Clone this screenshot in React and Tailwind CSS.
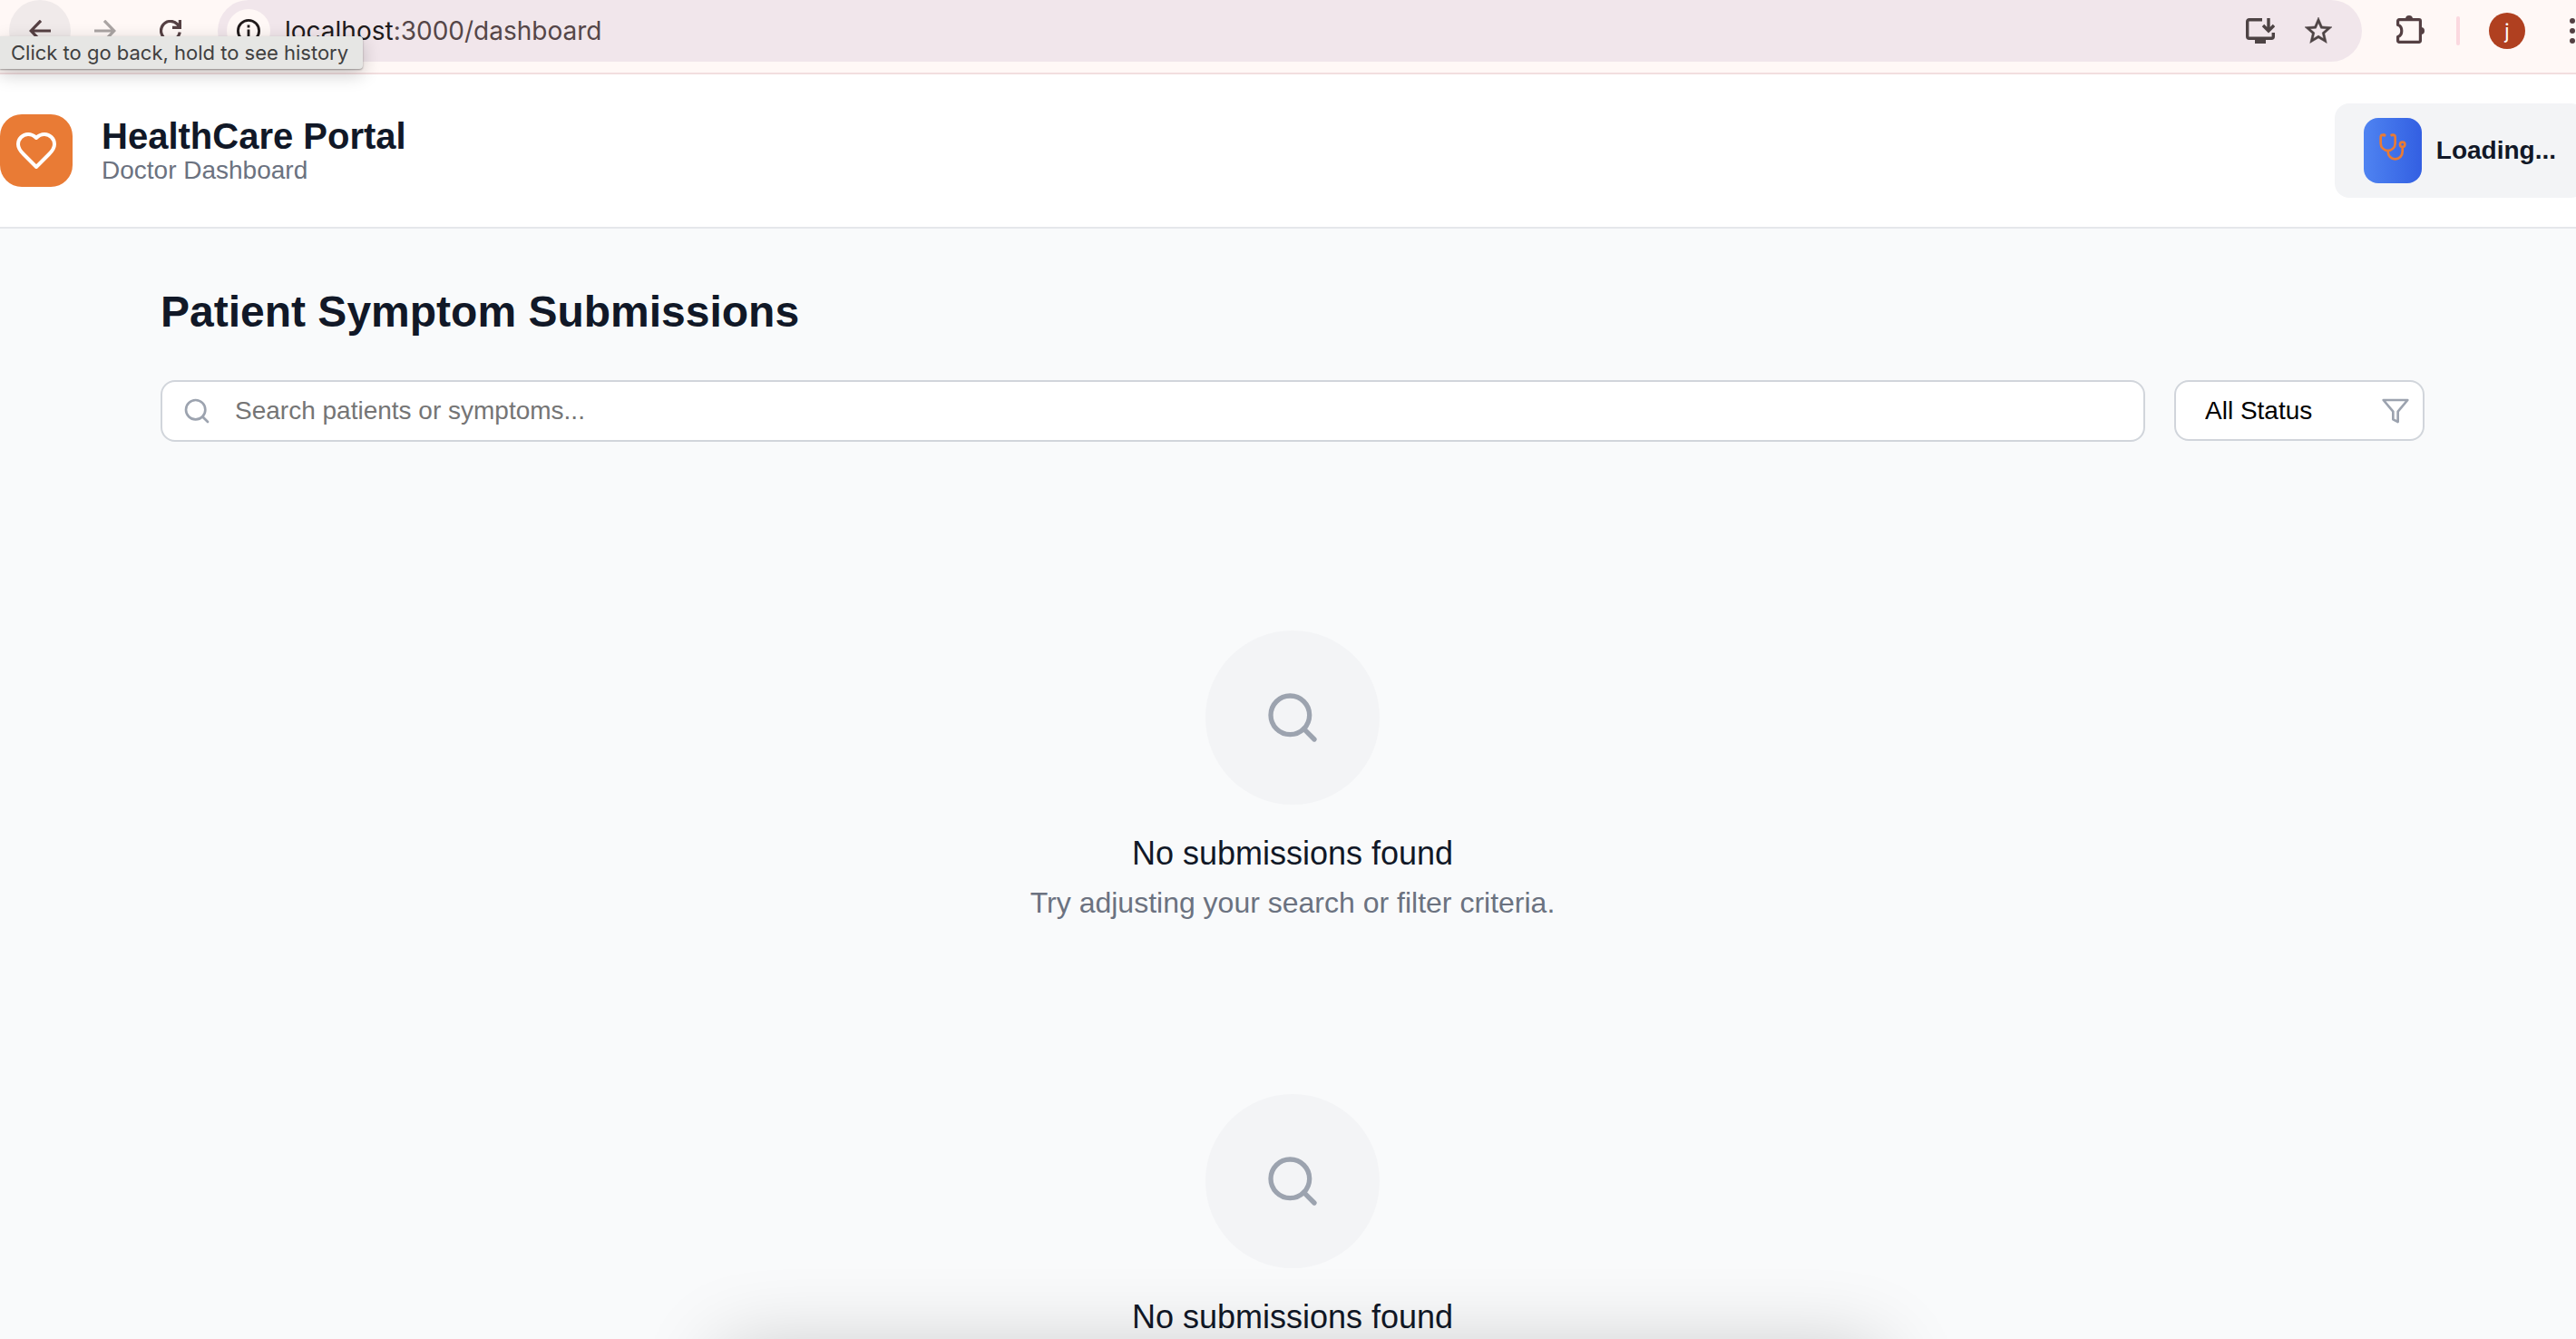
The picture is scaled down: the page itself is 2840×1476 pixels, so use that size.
import { Search } from "lucide-react";

function InfoIcon() {
  return (
    <svg viewBox="0 0 26 26" className="size-[26px]" fill="none" stroke="currentColor" strokeWidth="2.8">
      <circle cx="13" cy="13" r="11.6" />
      <path d="M13 11.5v7.5M13 6.5v3" />
    </svg>
  );
}

function InstallIcon() {
  return (
    <svg viewBox="0 0 32 28" className="h-7 w-8" fill="none" stroke="currentColor" strokeWidth="3.4">
      <path d="M18 1.7H3.7a2 2 0 0 0-2 2v16.6a2 2 0 0 0 2 2h24.6a2 2 0 0 0 2-2V16" />
      <path d="M25 0v14M19 8l6 6 6-6" />
      <path d="M10 23h12v5H10z" fill="currentColor" stroke="none" />
    </svg>
  );
}

function StarIcon() {
  return (
    <svg viewBox="0 0 24 24" className="size-9" fill="currentColor">
      <path stroke="currentColor" strokeWidth="0.3" d="M22 9.24l-7.19-.62L12 2 9.19 8.63 2 9.24l5.46 4.73L5.82 21 12 17.27 18.18 21l-1.63-7.03L22 9.24zM12 15.4l-3.76 2.27 1-4.28-3.32-2.88 4.38-.38L12 6.1l1.71 4.04 4.38.38-3.32 2.88 1 4.28L12 15.4z" />
    </svg>
  );
}

function ExtensionIcon() {
  return (
    <svg viewBox="0 0 32 32" className="size-8" fill="none">
      <path
        d="M1.6 24.5V29A1.4 1.4 0 0 0 3 30.4h22a1.4 1.4 0 0 0 1.4-1.4V7A1.4 1.4 0 0 0 25 5.6H3A1.4 1.4 0 0 0 1.6 7v4.500c3 .8 4.200 3.500 4.200 6.500s-1.200 5.700-4.200 6.500z"
        stroke="currentColor"
        strokeWidth="3.2"
        strokeLinejoin="round"
      />
      <path d="M10 5a4 4 0 0 1 8 0zM27 14a4 4 0 0 1 0 8z" fill="currentColor" />
    </svg>
  );
}

function StethoscopeIcon() {
  return (
    <svg viewBox="0 0 24 24" className="size-8" fill="none" stroke="currentColor" strokeWidth="2" strokeLinecap="round" strokeLinejoin="round">
      <path d="M4.8 2.3A.3.3 0 1 0 5 2H4a2 2 0 0 0-2 2v5a6 6 0 0 0 6 6 6 6 0 0 0 6-6V4a2 2 0 0 0-2-2h-1a.2.2 0 1 0 .3.3" />
      <path d="M8 15v1a6 6 0 0 0 6 6 6 6 0 0 0 6-6v-4" />
      <circle cx="20" cy="10" r="2" />
    </svg>
  );
}

function BrowserBar() {
  return (
    <div className="relative flex h-[82px] items-start border-b-2 border-[#f2dedf] bg-[#fff8f6] pl-[10px] text-[#554043] font-[Inter,sans-serif]">
      <button aria-label="Back" className="flex size-[68px] shrink-0 items-center justify-center rounded-full bg-[#f0eaea]">
        <svg viewBox="0 0 24 24" className="size-6" fill="none" stroke="currentColor" strokeWidth="3.2"><path d="M24 12H2M13 .8 2.2 12 13 23.2" /></svg>
      </button>
      <button aria-label="Forward" className="ml-1 flex size-[68px] shrink-0 items-center justify-center text-[#aaa4a3]">
        <svg viewBox="0 0 24 24" className="size-6" fill="none" stroke="currentColor" strokeWidth="3.2"><path d="M0 12h22M11 .8 21.8 12 11 23.2" /></svg>
      </button>
      <button aria-label="Reload" className="ml-1 flex size-[68px] shrink-0 items-center justify-center">
        <svg viewBox="0 0 24 24" className="size-6" fill="none" stroke="currentColor" strokeWidth="3.2"><path d="M22.2 13.5A10.4 10.4 0 1 1 19.5 4.7L22 7.5M22.4 0v8.400H14" /></svg>
      </button>
      <div className="ml-[18px] flex h-[68px] flex-1 items-center rounded-full bg-[#f1e6eb] pl-[10px] pr-[30px]">
        <button aria-label="Site information" className="flex size-12 shrink-0 items-center justify-center rounded-full bg-[#fff8f6] text-[#201a1b]">
          <InfoIcon />
        </button>
        <span className="ml-4 flex-1 text-[28px] leading-9 text-[#554648]"><span className="text-[#201a1b]">localhost</span>:3000/dashboard</span>
        <button aria-label="Install app" className="text-[#4d4344]"><InstallIcon /></button>
        <button aria-label="Bookmark" className="ml-[30px] text-[#4d4344]"><StarIcon /></button>
      </div>
      <div className="flex h-[68px] items-center pl-[38px]">
        <button aria-label="Extensions" className="pb-1"><ExtensionIcon /></button>
        <span className="ml-[34px] h-8 w-1 rounded-full bg-[#fbd9e0]" />
        <button aria-label="Profile" className="ml-8 flex size-10 items-center justify-center rounded-full bg-[#b04020] text-[22px] text-white">j</button>
        <button aria-label="Menu" className="ml-12">
          <svg viewBox="0 0 8 28" className="h-7 w-2" fill="currentColor"><circle cx="4" cy="3" r="3" /><circle cx="4" cy="14" r="3" /><circle cx="4" cy="25" r="3" /></svg>
        </button>
      </div>
      <div role="tooltip" className="absolute left-0 top-10 flex h-9 items-center rounded-r-sm bg-[#e6e6e4] pl-3 pr-4 text-[22px] text-[#404040] shadow-[0_1px_2px_rgba(0,0,0,0.35),0_6px_20px_rgba(0,0,0,0.2)]">
        Click to go back, hold to see history
      </div>
    </div>
  );
}

function Header() {
  return (
    <header className="flex items-center justify-between overflow-hidden border-b-2 border-[#e5e7eb] bg-white py-8">
      <div className="flex items-center gap-8">
        <div className="flex size-20 items-center justify-center rounded-3xl bg-[#e97b35] text-white">
          <svg viewBox="0 0 24 24" className="size-12" fill="none" stroke="currentColor" strokeWidth="2" strokeLinecap="round" strokeLinejoin="round"><path d="M19 14c1.49-1.46 3-3.21 3-5.5A5.5 5.5 0 0 0 16.5 3c-1.76 0-3 .5-4.5 2-1.5-1.5-2.74-2-4.5-2A5.5 5.5 0 0 0 2 8.5c0 2.3 1.5 4.05 3 5.5l7 7Z" /></svg>
        </div>
        <div className="pt-1">
          <div className="text-[40px] font-bold leading-10 text-[#111827]">HealthCare Portal</div>
          <div className="text-[28px] leading-9 text-[#6b7280]">Doctor Dashboard</div>
        </div>
      </div>
      <div className="-mr-2.5 flex items-center gap-4 rounded-2xl bg-[#f3f4f6] py-4 pl-8 pr-8">
        <div className="flex h-[72px] w-16 justify-center rounded-2xl bg-linear-to-r from-[#4f83f1] to-[#335fe2] pt-4 text-[#e97b35]">
          <StethoscopeIcon />
        </div>
        <span className="text-[28px] font-bold text-[#111827]">Loading...</span>
      </div>
    </header>
  );
}

function EmptyState() {
  return (
    <section className="flex flex-col items-center text-center">
      <div className="flex size-48 items-center justify-center rounded-full bg-[#f3f4f6] text-[#9ca3af]">
        <Search className="size-16" />
      </div>
      <h2 className="mt-8 text-[36px] leading-[44px] text-[#111827]">No submissions found</h2>
      <p className="mt-2 text-[32px] leading-[48px] text-[#6b7280]">Try adjusting your search or filter criteria.</p>
    </section>
  );
}

export default function App() {
  return (
    <div className="relative h-screen overflow-hidden bg-[#f9fafb] font-['Liberation_Sans',Arial,sans-serif]">
      <BrowserBar />
      <Header />
      <main className="pl-[177px] pr-[167px] pt-16">
        <h1 className="text-[48px] font-bold leading-[56px] text-[#111827]">Patient Symptom Submissions</h1>
        <div className="mt-[47px] flex items-start gap-8">
          <label className="flex h-[68px] flex-1 items-center rounded-2xl border-2 border-[#d1d5db] bg-white pl-[22px]">
            <Search className="size-8 shrink-0 text-[#9ca3af]" />
            <input aria-label="Search patients" placeholder="Search patients or symptoms..." className="ml-[26px] flex-1 text-[28px] outline-none placeholder:text-[#757575]" />
          </label>
          <div className="relative">
            <select aria-label="Status" className="h-[67px] w-[276px] appearance-none rounded-2xl border-2 border-[#d1d5db] bg-white pl-8 text-[28px] text-black">
              <option>All Status</option>
            </select>
            <svg viewBox="0 0 24 24" className="pointer-events-none absolute right-4 top-[18px] size-8 text-[#9ca3af]" fill="none" stroke="currentColor" strokeWidth="2" strokeLinecap="round" strokeLinejoin="round"><polygon points="22 3 2 3 10 12.46 10 19 14 21 14 12.46 22 3" /></svg>
          </div>
        </div>
        <div className="flex flex-col gap-[187px] pt-52">
          <EmptyState />
          <EmptyState />
        </div>
      </main>
      <div className="absolute left-[28%] right-[27%] top-full h-40 shadow-[0_10px_90px_rgba(0,0,0,0.2)]" />
    </div>
  );
}
